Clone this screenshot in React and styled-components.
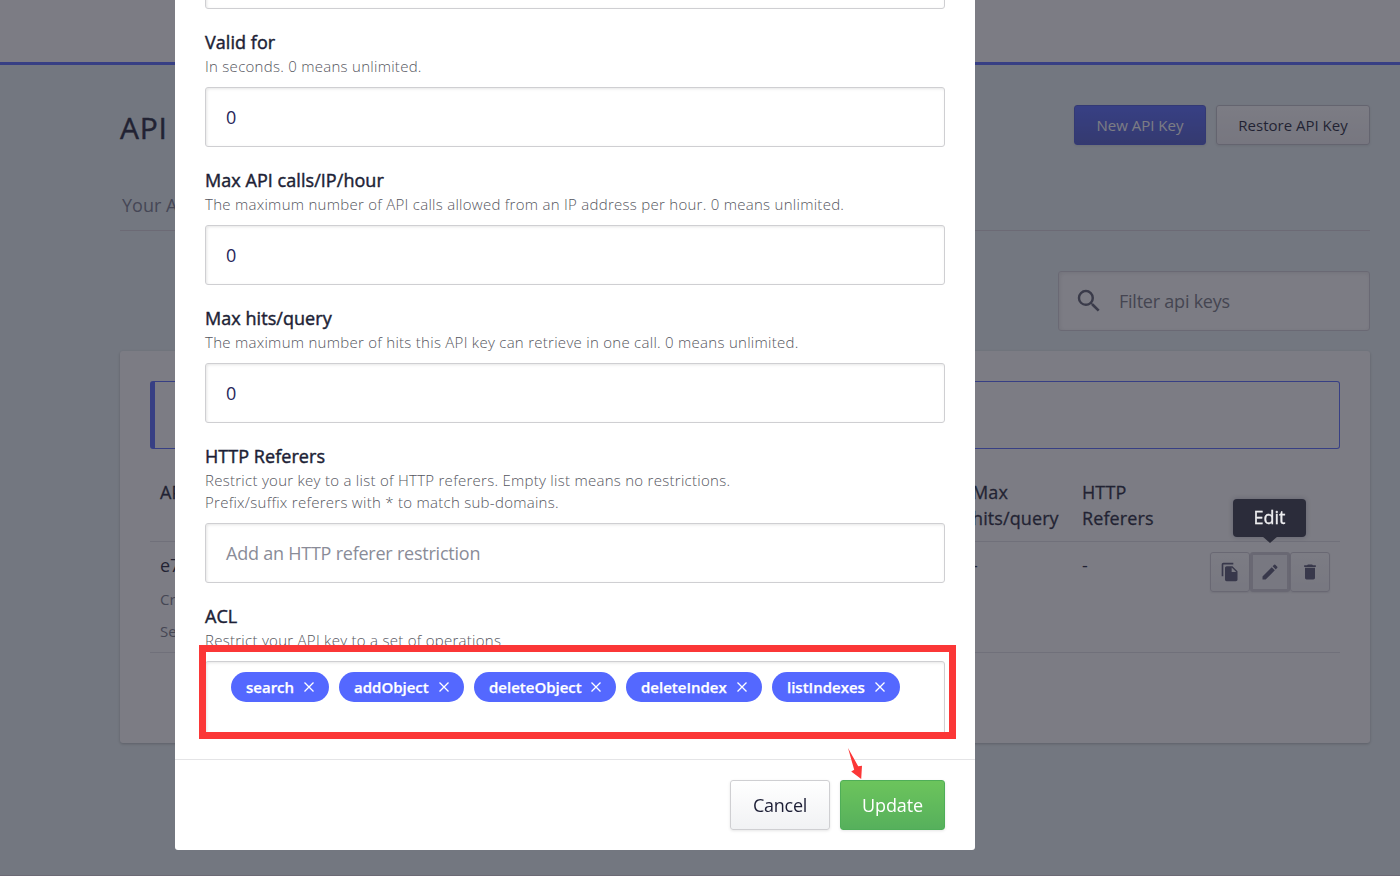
import React from 'react';
import styled, { createGlobalStyle, css } from 'styled-components';
import { MdSearch, MdFileCopy, MdEdit, MdDelete } from 'react-icons/md';

const Global = createGlobalStyle`
  * { box-sizing: border-box; }
  html, body { margin: 0; height: 876px; overflow: hidden; }
  body {
    font-family: "Open Sans", "Noto Sans", sans-serif;
    font-size: 18px;
    line-height: 26px;
    color: #1d1f36;
    background: #e9f3f5;
  }
`;

const medium = css`
  font-weight: 500;
  -webkit-text-stroke: 0.45px currentColor;
`;

const Page = styled.div`
  height: 876px;
  display: flex;
  flex-direction: column;
  overflow: hidden;
`;

const TopBar = styled.header`
  flex: none;
  height: 65px;
  background: #fff;
  border-bottom: 3px solid #5468ff;
`;

const Main = styled.main`
  flex: none;
  height: 811px;
  padding: 40px 30px 0 120px;
  border-bottom: 1px solid #d6d3da;
`;

const TitleRow = styled.div`
  display: flex;
  align-items: flex-start;
  gap: 10px;
  height: 40px;
`;

const Title = styled.h1`
  flex: 1;
  margin: 3px 0 0;
  font-size: 30px;
  line-height: 40px;
  letter-spacing: 0.8px;
  ${medium}
`;

const SmallButton = styled.button`
  height: 40px;
  width: ${(p) => p.$width}px;
  padding: 0;
  border-radius: 3px;
  font: 400 15px/24px "Open Sans", sans-serif;
  border: 1px solid #c4c2ca;
  color: #1d1f36;
  background: linear-gradient(#fff, #f2f1f4);
  box-shadow: 0 1px 3px rgba(0, 0, 0, 0.1);
  ${(p) =>
    p.$primary &&
    css`
      color: #fff;
      border-color: #4a57d6;
      background: linear-gradient(#5468ff, #4d5acc);
    `}
`;

const Tabs = styled.nav`
  height: 46px;
  margin-top: 40px;
  padding: 7px 2px 0;
  border-bottom: 1px solid #d6d3da;
  color: #777a8c;
`;

const FilterBox = styled.label`
  display: flex;
  align-items: center;
  width: 312px;
  height: 60px;
  margin: 40px 0 20px auto;
  padding-left: 15px;
  gap: 15px;
  letter-spacing: -0.23px;
  color: #75777f;
  background: #fff;
  border: 1px solid #d3d0d8;
  border-radius: 3px;
  box-shadow: inset 1px 1px 4px rgba(0, 0, 0, 0.1);
  svg { color: #5b5d6e; margin-top: -1px; }
`;

const Card = styled.section`
  height: 392px;
  padding: 30px;
  background: #fff;
  border-radius: 3px;
  box-shadow: 0 1px 3px rgba(0, 0, 0, 0.26);
`;

const Notice = styled.div`
  height: 68px;
  border: 1px solid #5468ff;
  border-left-width: 5px;
  border-radius: 3px;
`;

const Row = styled.div`
  display: grid;
  grid-template-columns: 812px 110px 128px 120px;
  padding: 0 0 0 10px;
  border-bottom: 1px solid #e0e0e5;
`;

const HeadRow = styled(Row)`
  height: 93px;
  padding-top: 30px;
  letter-spacing: 0.1px;
  ${medium}
  -webkit-text-stroke-width: 0.3px;
`;

const KeyRow = styled(Row)`
  height: 111px;
  padding-top: 10px;
`;

const Cell = styled.div``;

const Meta = styled.div`
  margin-top: 10px;
  font-size: 15px;
  line-height: 22px;
  font-weight: 400;
  color: #777a88;
`;

const Actions = styled.div`
  display: flex;
`;

const IconButton = styled.button`
  display: flex;
  align-items: center;
  justify-content: center;
  width: 40px;
  height: 40px;
  padding: 0;
  color: #555570;
  border: 1px solid #d0ced5;
  border-radius: 3px;
  background: linear-gradient(#fff, #f4f4f6);
  box-shadow: 0 1px 2px rgba(0, 0, 0, 0.1);
  ${(p) =>
    p.$focused &&
    css`
      border: 3px solid #d0ced5;
      background: #f6f6f8;
    `}
`;

const Backdrop = styled.div`
  position: fixed;
  inset: 0;
  display: flex;
  align-items: flex-start;
  padding-left: 175px;
  background: rgba(37, 37, 50, 0.6);
`;

const Modal = styled.div`
  display: flex;
  flex-direction: column;
  width: 800px;
  height: 850px;
  background: #fff;
  border-radius: 0 0 3px 3px;
  overflow: hidden;
`;

const ModalBody = styled.div`
  display: flex;
  flex-direction: column;
  justify-content: flex-end;
  height: 759px;
  padding: 0 30px 24px;
  overflow: hidden;
`;

const ModalFooter = styled.footer`
  display: flex;
  justify-content: flex-end;
  gap: 10px;
  height: 91px;
  padding: 20px 30px;
  border-top: 1px solid #e4e4e6;
`;

const Field = styled.div`
  flex: none;
  margin-top: 20px;
`;

const Label = styled.div`
  line-height: 26px;
  letter-spacing: 0.05px;
  ${medium}
`;

const Hint = styled.div`
  margin-bottom: 10px;
  font-size: 15px;
  line-height: 22px;
  font-weight: 300;
  letter-spacing: 0.275px;
  color: #55565e;
`;

const Control = styled.div`
  flex: none;
  display: flex;
  align-items: center;
  height: 60px;
  padding: 0 20px;
  border: 1px solid #cfcfd2;
  border-radius: 3px;
  box-shadow: inset 1px 1px 3px rgba(0, 0, 0, 0.1);
  letter-spacing: -0.23px;
  color: ${(p) => (p.$placeholder ? '#8a8c98' : '#26265a')};
`;

const TagControl = styled(Control)`
  align-items: flex-start;
  gap: 10px;
  height: 74px;
  padding: 10px 25px;
  letter-spacing: 0;
`;

const Tag = styled.span`
  display: flex;
  align-items: center;
  justify-content: space-between;
  width: ${(p) => p.$width}px;
  height: 30px;
  padding: 0 15px;
  border-radius: 15px;
  font-size: 15px;
  font-weight: 600;
  -webkit-text-stroke: 0.25px #fff;
  color: #fff;
  background: #5468ff;
`;

const Button = styled.button`
  width: ${(p) => p.$width}px;
  height: 50px;
  padding: 0;
  border: 1px solid #cfcfd2;
  border-radius: 3px;
  font: 400 18px/26px "Open Sans", sans-serif;
  letter-spacing: -0.25px;
  color: #1d1f36;
  background: linear-gradient(#fff, #f1f2f4);
  box-shadow: 0 1px 3px rgba(0, 0, 0, 0.1);
  ${(p) =>
    p.$confirm &&
    css`
      color: #fff;
      letter-spacing: -0.1px;
      border-color: #4fae58;
      background: linear-gradient(#6cc45c, #56b05c);
    `}
`;

const Tooltip = styled.div`
  position: absolute;
  left: 1233px;
  top: 499px;
  width: 73px;
  height: 38px;
  line-height: 37px;
  text-align: center;
  ${medium}
  -webkit-text-stroke-width: 0.3px;
  color: #eeeef0;
  background: #2b2c3a;
  border-radius: 4px;
  box-shadow: 0 0 5px rgba(40, 40, 55, 0.3);
  &::after {
    content: '';
    position: absolute;
    left: 29px;
    top: 37px;
    border: 8px solid transparent;
    border-top: 7px solid #2b2c3a;
    border-bottom: 0;
  }
`;

const Highlight = styled.div`
  position: absolute;
  left: 199px;
  top: 645px;
  width: 757px;
  height: 94px;
  border: 7px solid #fb3737;
`;

const Pointer = styled.svg`
  position: absolute;
  left: 840px;
  top: 740px;
`;

const fields = [
  { label: 'Valid for', hints: ['In seconds. 0 means unlimited.'], value: '0' },
  {
    label: 'Max API calls/IP/hour',
    hints: ['The maximum number of API calls allowed from an IP address per hour. 0 means unlimited.'],
    value: '0',
  },
  {
    label: 'Max hits/query',
    hints: ['The maximum number of hits this API key can retrieve in one call. 0 means unlimited.'],
    value: '0',
  },
  {
    label: 'HTTP Referers',
    hints: [
      'Restrict your key to a list of HTTP referers. Empty list means no restrictions.',
      'Prefix/suffix referers with * to match sub-domains.',
    ],
    placeholder: 'Add an HTTP referer restriction',
  },
];

const tags = [
  ['search', 98],
  ['addObject', 125],
  ['deleteObject', 142],
  ['deleteIndex', 136],
  ['listIndexes', 128],
];

const Cross = () => (
  <svg width="10" height="10" viewBox="0 0 10 10" fill="none" stroke="#fff" strokeWidth="1.3">
    <path d="M.5 .5l9 9M9.5 .5l-9 9" />
  </svg>
);

export default function App() {
  return (
    <>
      <Global />
      <Page>
        <TopBar />
        <Main>
          <TitleRow>
            <Title>API</Title>
            <SmallButton $width={132} $primary>New API Key</SmallButton>
            <SmallButton $width={154}>Restore API Key</SmallButton>
          </TitleRow>
          <Tabs>Your A</Tabs>
          <FilterBox>
            <MdSearch size={30} />
            Filter api keys
          </FilterBox>
          <Card>
            <Notice />
            <HeadRow>
              <Cell>AP</Cell>
              <Cell>Max<br />hits/query</Cell>
              <Cell>HTTP<br />Referers</Cell>
            </HeadRow>
            <KeyRow>
              <Cell>
                e7
                <Meta>Cr</Meta>
                <Meta>Se</Meta>
              </Cell>
              <Cell>-</Cell>
              <Cell>-</Cell>
              <Actions>
                <IconButton><MdFileCopy size={20} /></IconButton>
                <IconButton $focused><MdEdit size={20} /></IconButton>
                <IconButton><MdDelete size={20} /></IconButton>
              </Actions>
            </KeyRow>
          </Card>
        </Main>
      </Page>
      <Backdrop>
        <Modal>
          <ModalBody>
            <Control />
            {fields.map((f) => (
              <Field key={f.label}>
                <Label>{f.label}</Label>
                <Hint>
                  {f.hints.map((h) => <div key={h}>{h}</div>)}
                </Hint>
                <Control $placeholder={!!f.placeholder}>{f.value || f.placeholder}</Control>
              </Field>
            ))}
            <Field>
              <Label>ACL</Label>
              <Hint>Restrict your API key to a set of operations</Hint>
              <TagControl>
                {tags.map(([name, width]) => (
                  <Tag key={name} $width={width}>{name}<Cross /></Tag>
                ))}
              </TagControl>
            </Field>
          </ModalBody>
          <ModalFooter>
            <Button $width={100}>Cancel</Button>
            <Button $width={105} $confirm>Update</Button>
          </ModalFooter>
        </Modal>
      </Backdrop>
      <Tooltip>Edit</Tooltip>
      <Highlight />
      <Pointer width="30" height="42" viewBox="0 0 30 42">
        <path d="M8 8L18.2 26.2L22 25.8L21.2 39L11.2 31.6L14.2 29.8Z" fill="#fb3737" />
      </Pointer>
    </>
  );
}
